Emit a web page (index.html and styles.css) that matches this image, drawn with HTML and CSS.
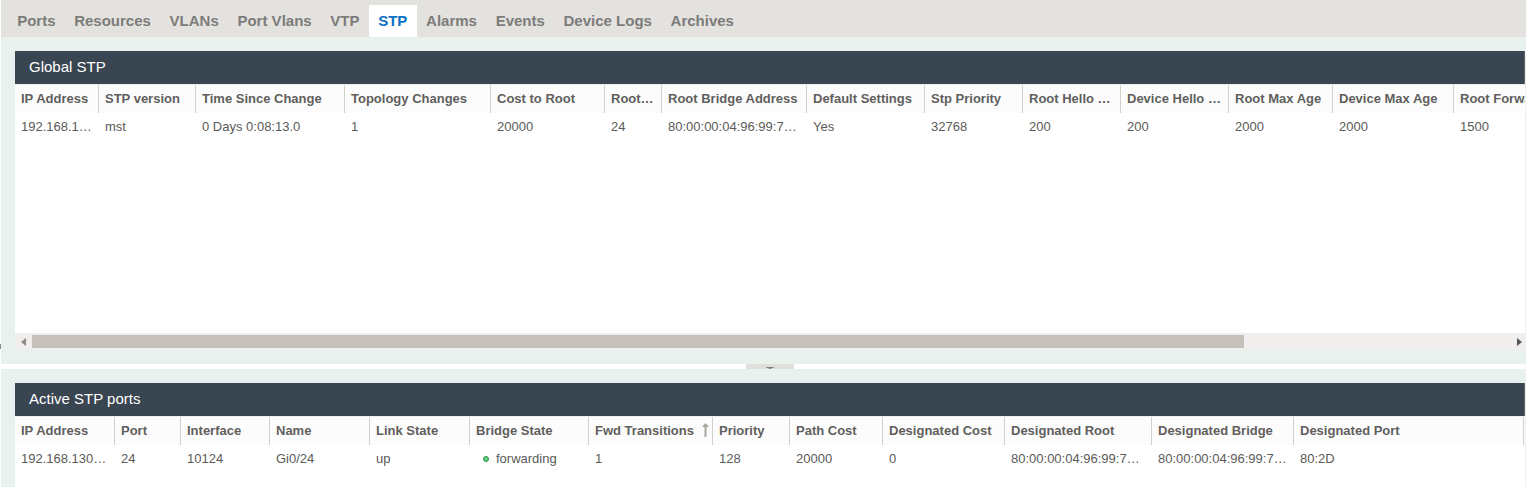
FILE: index.html
```html
<!DOCTYPE html>
<html lang="en">
<head>
  <meta charset="UTF-8" />
  <meta name="viewport" content="width=device-width, initial-scale=1" />
  <title>Device STP</title>
  <link rel="stylesheet" href="styles.css">
</head>
<body>
  <nav class="tabs">
    <a class="tab">Ports</a>
    <a class="tab">Resources</a>
    <a class="tab">VLANs</a>
    <a class="tab">Port Vlans</a>
    <a class="tab">VTP</a>
    <a class="tab active">STP</a>
    <a class="tab">Alarms</a>
    <a class="tab">Events</a>
    <a class="tab">Device Logs</a>
    <a class="tab">Archives</a>
  </nav>

  <section class="pane pane-top">
    <h2 class="pane-title">Global STP</h2>
    <div class="table-body global-body">
      <div class="row head global-cols">
        <div class="cell">IP Address</div>
        <div class="cell">STP version</div>
        <div class="cell">Time Since Change</div>
        <div class="cell">Topology Changes</div>
        <div class="cell">Cost to Root</div>
        <div class="cell">Root Port</div>
        <div class="cell">Root Bridge Address</div>
        <div class="cell">Default Settings</div>
        <div class="cell">Stp Priority</div>
        <div class="cell">Root Hello Time</div>
        <div class="cell">Device Hello Time</div>
        <div class="cell">Root Max Age</div>
        <div class="cell">Device Max Age</div>
        <div class="cell clip">Root Forward Delay</div>
      </div>
      <div class="row data global-cols">
        <div class="cell">192.168.130.254</div>
        <div class="cell">mst</div>
        <div class="cell">0 Days 0:08:13.0</div>
        <div class="cell">1</div>
        <div class="cell">20000</div>
        <div class="cell">24</div>
        <div class="cell">80:00:00:04:96:99:7A:2D</div>
        <div class="cell">Yes</div>
        <div class="cell">32768</div>
        <div class="cell">200</div>
        <div class="cell">200</div>
        <div class="cell">2000</div>
        <div class="cell">2000</div>
        <div class="cell">1500</div>
      </div>
    </div>
    <div class="scrollbar">
      <span class="arrow arrow-left"></span>
      <div class="track"><div class="thumb"></div></div>
      <span class="arrow arrow-right"></span>
    </div>
  </section>

  <div class="splitter">
    <span class="edge-mark"></span>
    <div class="handle"><span class="handle-arrow"></span></div>
  </div>

  <section class="pane pane-bottom">
    <h2 class="pane-title">Active STP ports</h2>
    <div class="table-body">
      <div class="row head ports-cols">
        <div class="cell">IP Address</div>
        <div class="cell">Port</div>
        <div class="cell">Interface</div>
        <div class="cell">Name</div>
        <div class="cell">Link State</div>
        <div class="cell">Bridge State</div>
        <div class="cell sorted">Fwd Transitions
          <svg class="sort-icon" width="7" height="14" viewBox="0 0 7 14"><path d="M3.5 0 L7 4 H4.5 V14 H2.5 V4 H0 Z" fill="#a9a69f"/></svg>
        </div>
        <div class="cell">Priority</div>
        <div class="cell">Path Cost</div>
        <div class="cell">Designated Cost</div>
        <div class="cell">Designated Root</div>
        <div class="cell">Designated Bridge</div>
        <div class="cell">Designated Port</div>
      </div>
      <div class="row data ports-cols">
        <div class="cell">192.168.130.254</div>
        <div class="cell">24</div>
        <div class="cell">10124</div>
        <div class="cell">Gi0/24</div>
        <div class="cell">up</div>
        <div class="cell state"><span class="dot"></span>forwarding</div>
        <div class="cell">1</div>
        <div class="cell">128</div>
        <div class="cell">20000</div>
        <div class="cell">0</div>
        <div class="cell">80:00:00:04:96:99:7A:2D</div>
        <div class="cell">80:00:00:04:96:99:7A:2D</div>
        <div class="cell">80:2D</div>
      </div>
    </div>
  </section>
</body>
</html>
```

FILE: styles.css
```css
html, body {
  height: 100%;
  overflow: hidden;
}

body {
  margin: 0;
  background-color: #fff;
  font-family: "Liberation Sans", Arial, sans-serif;
  font-size: 13px;
  color: #5a5a58;
}

.tabs {
  display: flex;
  align-items: flex-end;
  height: 37px;
  margin-left: 1px;
  padding-left: 6.8px;
  background-color: #e3e2df;
}

.tab {
  height: 32px;
  line-height: 31px;
  padding: 0 9.35px;
  font-size: 15px;
  font-weight: bold;
  color: #7c7c7a;
}

.tab.active {
  background-color: #fff;
  color: #0b6fc2;
}

.pane {
  margin-left: 1px;
  padding: 14px 1px 0 14px;
  background-color: #e8f1ed;
}

.pane-top {
  height: 313px;
}

.pane-bottom {
  height: 104px;
}

.pane-title {
  height: 33px;
  margin: 0 0 1px;
  padding-left: 14px;
  background-color: #394551;
  border-right: 1px solid #5b6670;
  font-size: 15px;
  font-weight: normal;
  line-height: 31px;
  color: #fff;
}

.table-body {
  background-color: #fff;
  overflow: hidden;
}

.pane-bottom .table-body {
  height: 71px;
}

.global-body {
  height: 248px;
}

.row {
  display: grid;
}

.global-cols {
  grid-template-columns: 84px 97px 149px 146px 114px 57px 145px 118px 98px 98px 108px 104px 121px 200px;
}

.ports-cols {
  grid-template-columns: 100px 66px 89px 100px 100px 119px 124px 77px 93px 122px 147px 142px 230px;
}

.cell {
  min-width: 0;
  padding: 0 6px;
  overflow: hidden;
  white-space: nowrap;
  text-overflow: ellipsis;
}

.cell.clip {
  text-overflow: clip;
}

.head {
  height: 28px;
  background-color: #fdfcfc;
  font-weight: bold;
  line-height: 27px;
  color: #605f5d;
}

.head .cell {
  border-right: 1px solid #d2d0cb;
}

.data {
  height: 26px;
  line-height: 28px;
}

.sorted {
  position: relative;
}

.sort-icon {
  position: absolute;
  right: 3px;
  top: 6px;
}

.state {
  padding-left: 13px;
}

.dot {
  display: inline-block;
  width: 4px;
  height: 4px;
  margin-right: 7px;
  border: 1px solid #2f8f4a;
  border-radius: 50%;
  background-color: #5fd07c;
  vertical-align: 1px;
}

.scrollbar {
  display: flex;
  align-items: center;
  height: 17px;
  background-color: #f1efed;
}

.track {
  flex: 1;
}

.thumb {
  width: 1212px;
  height: 13px;
  background-color: #c5c1ba;
}

.arrow {
  width: 17px;
  display: flex;
  justify-content: center;
}

.arrow::before {
  content: "";
  border-top: 4px solid transparent;
  border-bottom: 4px solid transparent;
}

.arrow-left::before {
  border-right: 5px solid #8b8a86;
}

.arrow-right {
  width: 12px;
}

.arrow-right::before {
  border-left: 5px solid #555;
}

.splitter {
  position: relative;
  display: flex;
  justify-content: center;
  height: 5px;
  margin-left: 1px;
  padding-left: 13px;
  background-color: #fff;
}

.edge-mark {
  position: absolute;
  left: -1px;
  top: -20px;
  width: 1px;
  height: 5px;
  background-color: #8b8a86;
}

.handle {
  display: flex;
  justify-content: center;
  width: 48px;
  background-color: #e0dfdc;
  padding-top: 3px;
  box-sizing: border-box;
}

.handle-arrow {
  width: 0;
  height: 0;
  border-left: 5px solid transparent;
  border-right: 5px solid transparent;
  border-top: 2px solid #7d7c78;
}
```
